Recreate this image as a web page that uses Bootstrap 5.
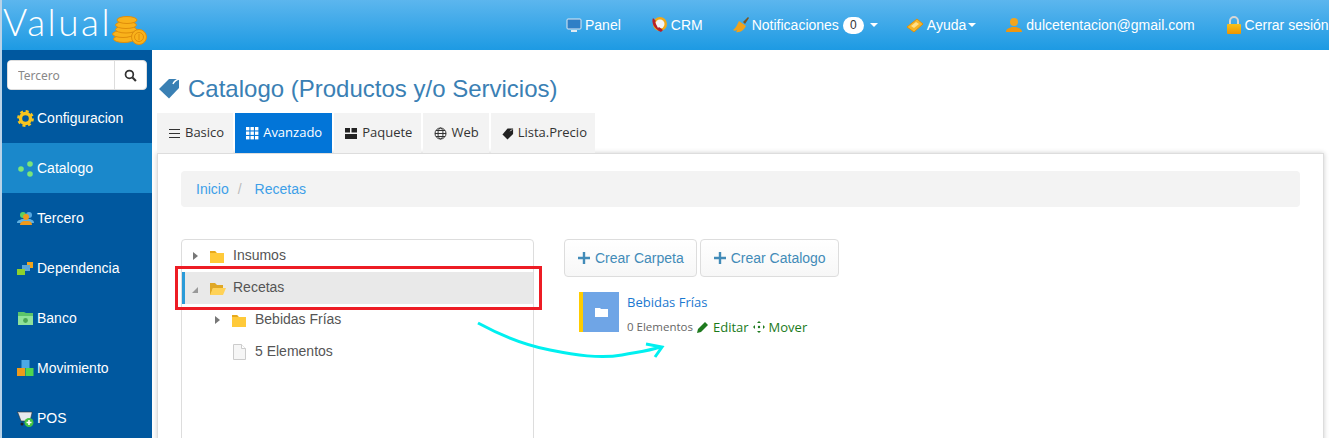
<!DOCTYPE html>
<html lang="es"><head><meta charset="utf-8"><title>Catalogo</title>
<link href="https://cdn.jsdelivr.net/npm/bootstrap@5.3.0/dist/css/bootstrap.min.css" rel="stylesheet">
<style>
html,body{height:438px;overflow:hidden}
body{font-family:"Liberation Sans",Arial,sans-serif;font-size:14px;color:#555;background:#fff;position:relative}
.top-bar{height:50px;background:linear-gradient(#5cb6ee,#1d9ae3);padding:0;flex-wrap:nowrap;justify-content:flex-start;border-left:2px solid #b9d3e8}
.brand-box{width:150px;height:50px;color:#fff;font-size:37px;line-height:44px;padding:0 0 6px 1px;letter-spacing:2.500px;font-family:"Lato","Liberation Sans",sans-serif;flex:none;gap:0}
.brand-name{font-weight:300}
.top-links{margin-left:414px;gap:29px;flex-wrap:nowrap;white-space:nowrap}
.top-links a{color:#fff;text-decoration:none;font-size:14px;display:flex;align-items:center;gap:3px}
.top-links a.lnk-notif{gap:2px}
.top-links a.lnk-help{gap:4px}
.top-links a.lnk-user{gap:4px;margin-left:1px}
.top-links a.lnk-exit{margin-left:2px}
.count-pill{background:#fff;color:#333;border-radius:9px;font-size:12px;line-height:17px;width:21px;text-align:center;margin-left:2px}
.caret-d{width:0;height:0;border:4px solid transparent;border-top-color:#fff;border-bottom:0}
.lnk-notif .caret-d{margin-left:4px}
.lnk-help .caret-d{margin-left:-2px}
.page-row{height:388px;overflow:hidden}
.side-col{width:152px;flex:none;background:#00589f;border-left:2px solid #b9d3e8;position:relative}
.find-box{margin:10px 5px 3px 5px;height:30px;background:#fff;border-radius:4px;overflow:hidden;border:1px solid #ddd}
.find-box input{border:0;outline:0;font-size:12px;color:#888;width:106px;padding:0 0 0 10px;height:28px;font-family:"Noto Sans","Open Sans",sans-serif}
.find-box input::placeholder{color:#888;opacity:1}
.find-btn{width:33px;border-left:1px solid #ddd}
.menu-item{height:50px;color:#fff;text-decoration:none;display:flex;align-items:center;gap:3px;padding:0 0 0 15px;font-size:14px}
.menu-item.on{background:#1a88cb}
.menu-item svg{flex:none}
.main-col{flex:1;min-width:0;padding:0 5px}
.page-title{font-family:"Liberation Sans",sans-serif;font-size:24px;color:#3a80b4;font-weight:400;margin:0 0 0 2px;height:63px;padding-top:14px;line-height:27px;display:flex;align-items:center;gap:8px}
.tab-row{gap:2px;height:40px;list-style:none;margin:0;padding:0}
.tab-row a{display:flex;align-items:center;gap:4px;height:40px;background:#f3f3f3;color:#333;text-decoration:none;padding:0 9px 0 11px;font-family:"Open Sans","Noto Sans",sans-serif;font-size:13px}
.tab-row a.on{background:#0275d8;color:#fff;padding-right:10px}
.tab-row a.tab-web{padding-right:10px}
.tab-row a.tab-price{padding-right:8px}
.white-panel{border:1px solid #ddd;border-bottom:0;box-shadow:0 0 5px rgba(0,0,0,.2);height:290px;padding:17px 23px 0 23px;background:#fff}
.crumb-bar{background:#f3f3f3;height:36px;border-radius:4px;display:flex;align-items:center;padding:0 15px;gap:6px;margin:0 0 32px 0}
.crumb-bar a{color:#3d9fe8;text-decoration:none}
.crumb-bar span{color:#bbb;margin:0 7px 0 3px}
.tree-wrap{width:353px;height:230px;border:1px solid #ddd;border-radius:4px;flex:none;color:#555}
.tree-line{height:32px;display:flex;align-items:center;position:relative}
.tree-line.sel{background:#e9e9e9;border-left:3px solid #2b9bd8}
.tree-line .tri{width:0;height:0;border-left:5px solid #777;border-top:4.500px solid transparent;border-bottom:4.500px solid transparent;margin-left:11px;margin-right:12px;flex:none}
.tree-line .tri-open{width:0;height:0;border-bottom:6px solid #999;border-left:6px solid transparent;margin-left:7px;margin-right:12px;margin-top:3px;flex:none}
.tree-label{margin-left:9px;padding-bottom:1px}
.sel .tree-label{margin-left:7px}
.lvl-2{padding-left:22px}
.lvl-2 .tri{margin-left:11px}
.lvl-file{padding-left:51px}
.right-pane{margin-left:30px}
.act-btn{height:38px;border:1px solid #ddd;border-radius:4px;background:linear-gradient(#fff,#f7f7f7);color:#428bb8;font-size:14px;display:flex;align-items:center;gap:5px;padding:0 12px 0 13px;text-decoration:none}
.act-row{gap:3px}
.folder-card{margin:15px 0 0 15px}
.folder-thumb{width:40px;height:40px;background:#6fa5e6;border-left:4px solid #ffcc00;display:flex;align-items:center;justify-content:center;flex:none}
.folder-meta{margin-left:8px;padding-top:2px;font-family:"Open Sans","Noto Sans",sans-serif;font-size:13px}
.folder-link{color:#1a78d0;text-decoration:none;display:block;line-height:16px;margin-bottom:9px}
.folder-sub{line-height:16px;white-space:nowrap;color:#666;font-size:11.500px;display:flex;align-items:center;gap:4px}
.folder-sub a{color:#1a7a1a;text-decoration:none;font-size:13px;display:inline-flex;align-items:center;gap:4px}
.over-mark{position:absolute;left:175px;top:266px;width:367px;height:44px;border:3px solid #ed1c24;pointer-events:none}
.over-arrow{position:absolute;left:470px;top:315px;pointer-events:none}
</style></head>
<body>
<nav class="navbar top-bar d-flex align-items-center">
  <div class="brand-box d-flex align-items-center"><span class="brand-name">Valual</span>
    <svg width="35" height="29" viewBox="0 0 35 29" class="mt-3 flex-shrink-0"><g fill="#f9b21b" stroke="#e08e0b" stroke-width="1"><ellipse cx="12" cy="23" rx="10.500" ry="3.500"/><ellipse cx="11" cy="18" rx="10.500" ry="3.500"/><ellipse cx="14" cy="13.500" rx="10.500" ry="3.500"/><ellipse cx="14" cy="9" rx="10.500" ry="3.500"/><ellipse cx="15" cy="4" rx="10" ry="3.500"/><circle cx="27" cy="21" r="7.500"/></g><circle cx="27" cy="21" r="4.500" fill="none" stroke="#e08e0b"/><path d="M27 18v6" stroke="#e08e0b"/></svg>
  </div>
  <div class="top-links d-flex align-items-center">
    <a href="#"><svg width="16" height="16" viewBox="0 0 16 16"><rect x="1" y="2" width="14" height="10" rx="1" fill="#2f7fc6" stroke="#dfe9f2"/><rect x="5" y="13" width="6" height="2" fill="#dfe9f2"/></svg>Panel</a>
    <a href="#"><svg width="18" height="18" viewBox="0 0 18 18"><circle cx="10" cy="8" r="7" fill="#f0a818"/><circle cx="10" cy="8" r="4.500" fill="#f4f4f4"/><path d="M3 2c-2 4 1 11 8 14l2-2-4-3-1 1-3-6 1-1z" fill="#b5202a"/></svg>CRM</a>
    <a href="#" class="lnk-notif"><svg width="18" height="18" viewBox="0 0 18 18"><path d="M11 6l5-5 1 1-4 6z" fill="#7a5520"/><path d="M7 5l7 5c-2 4-6 7-10 6 1-1 1-2 1-2-1 1-3 1-4 0 3-2 4-5 6-9z" fill="#f0a21c"/></svg>Notificaciones<span class="count-pill">0</span><span class="caret-d"></span></a>
    <a href="#" class="lnk-help"><svg width="16" height="16" viewBox="0 0 16 16"><path d="M0 10L10 2l6 5-9 8z" fill="#f5b52a" stroke="#d98f10"/><path d="M4 9l5-4 3 2-5 4z" fill="#ffe08a"/></svg>Ayuda<span class="caret-d"></span></a>
    <a href="#" class="lnk-user"><svg width="16" height="16" viewBox="0 0 16 16"><circle cx="8" cy="5" r="4" fill="#f2a51d"/><path d="M0 15c0-4 4-4 6-5h4c2 1 6 1 6 5z" fill="#ee9610"/></svg>dulcetentacion@gmail.com</a>
    <a href="#" class="lnk-exit"><svg width="16" height="18" viewBox="0 0 16 18"><defs><linearGradient id="lockfill" x1="0" y1="0" x2="0" y2="1"><stop offset="0" stop-color="#f7c21b"/><stop offset="1" stop-color="#ee9500"/></linearGradient></defs><path d="M4 8V5a4 4 0 0 1 8 0v3" fill="none" stroke="#d6d6d6" stroke-width="2"/><rect x="1" y="8" width="14" height="10" rx="1" fill="url(#lockfill)"/></svg>Cerrar sesión</a>
  </div>
</nav>
<div class="page-row d-flex">
  <aside class="side-col">
    <div class="find-box d-flex"><input placeholder="Tercero" aria-label="Tercero"><div class="find-btn d-flex align-items-center justify-content-center"><svg width="13" height="13" viewBox="0 0 12 12"><circle cx="5" cy="5" r="3.600" fill="none" stroke="#333" stroke-width="1.600"/><path d="M7.800 7.800L11 11" stroke="#333" stroke-width="2"/></svg></div></div>
    <a class="menu-item" href="#"><svg width="17" height="17" viewBox="0 0 17 17"><circle cx="8.500" cy="8.500" r="5" fill="none" stroke="#f7c51e" stroke-width="3.400"/><circle cx="8.500" cy="8.500" r="7.300" fill="none" stroke="#f7c51e" stroke-width="2.200" stroke-dasharray="3 2.730"/></svg>Configuracion</a>
    <a class="menu-item on" href="#"><svg width="17" height="17" viewBox="0 0 17 17"><circle cx="4" cy="9" r="2.800" fill="#7ae57a"/><circle cx="13" cy="4" r="2.800" fill="#7ae57a"/><circle cx="13" cy="14" r="2.800" fill="#7ae57a"/></svg>Catalogo</a>
    <a class="menu-item" href="#"><svg width="17" height="17" viewBox="0 0 17 17"><circle cx="6" cy="5" r="3" fill="#5fd05f"/><circle cx="12" cy="5" r="3" fill="#57a8e0"/><path d="M0 13c0-3 3-3 5-4h8c2 1 4 1 4 4z" fill="#5fb0e0"/><circle cx="9" cy="7" r="3" fill="#ef9a1c"/><path d="M3 15c0-3 3-4 4-4h4c2 0 4 1 4 4z" fill="#ef9a1c"/></svg>Tercero</a>
    <a class="menu-item" href="#"><svg width="17" height="17" viewBox="0 0 17 17"><rect x="10" y="2" width="6" height="6" fill="#f2a51d"/><rect x="5" y="5" width="8" height="6" fill="#5ba6d9"/><rect x="0" y="9" width="8" height="6" fill="#8ed12c"/></svg>Dependencia</a>
    <a class="menu-item" href="#"><svg width="17" height="15" viewBox="0 0 17 15"><path d="M1 1h6l2 1h7v12H1z" fill="#5cc46a"/><rect x="1" y="5" width="15" height="9" fill="#8fe29a"/><circle cx="8.500" cy="9.500" r="2.400" fill="#4aa856"/></svg>Banco</a>
    <a class="menu-item" href="#"><svg width="17" height="17" viewBox="0 0 17 17"><rect x="4.500" y="0" width="8" height="8" fill="#4ca9e6"/><rect x="0" y="8" width="8" height="8" fill="#ee9a1c"/><rect x="8.500" y="8" width="8" height="8" fill="#4fd64f"/></svg>Movimiento</a>
    <a class="menu-item" href="#"><svg width="17" height="17" viewBox="0 0 17 17"><path d="M0 2h15v1l-2 8H4L1 3z" fill="#e6eaee" stroke="#333" stroke-width=".600"/><circle cx="5" cy="14" r="1.500" fill="#222"/><circle cx="12" cy="12.500" r="4.500" fill="#43c443"/><path d="M12 10v5M9.500 12.500h5" stroke="#fff" stroke-width="1.600"/></svg>POS</a>
  </aside>
  <main class="main-col">
    <h1 class="page-title"><svg width="21" height="21" viewBox="0 0 21 21"><path d="M10 1h10v9L10 20.500 0 11z" fill="#3a80b4"/><path d="M14 6c1-3 3-4 6-5" fill="none" stroke="#fff" stroke-width="1.400"/></svg>Catalogo (Productos y/o Servicios)</h1>
    <ul class="tab-row d-flex">
      <li><a href="#"><svg width="13" height="13" viewBox="0 0 13 13"><path d="M1 2.500h11M1 6.500h11M1 10.500h11" stroke="#333" stroke-width="1.200"/></svg>Basico</a></li>
      <li><a class="on" href="#"><svg width="13" height="13" viewBox="0 0 13 13" fill="#fff"><rect width="3.400" height="3.400"/><rect x="4.500" width="3.400" height="3.400"/><rect x="9" width="3.400" height="3.400"/><rect y="4.500" width="3.400" height="3.400"/><rect x="4.500" y="4.500" width="3.400" height="3.400"/><rect x="9" y="4.500" width="3.400" height="3.400"/><rect y="9" width="3.400" height="3.400"/><rect x="4.500" y="9" width="3.400" height="3.400"/><rect x="9" y="9" width="3.400" height="3.400"/></svg>Avanzado</a></li>
      <li><a href="#"><svg width="13" height="13" viewBox="0 0 13 13" fill="#222"><rect y="1" width="5" height="4.500"/><rect x="6.500" y="1" width="5.500" height="4.500"/><rect y="7" width="12" height="5"/></svg>Paquete</a></li>
      <li><a class="tab-web" href="#"><svg width="13" height="13" viewBox="0 0 13 13" fill="none" stroke="#333"><circle cx="6.500" cy="6.500" r="5.500"/><ellipse cx="6.500" cy="6.500" rx="2.500" ry="5.500"/><path d="M1 6.500h11M2 3.500h9M2 9.500h9"/></svg>Web</a></li>
      <li><a class="tab-price" href="#"><svg width="12" height="13" viewBox="0 0 13 13" fill="#222"><path d="M6 1h6v6l-6 6-5.500-5.500z"/><path d="M9 4l2-2" stroke="#fff"/></svg>Lista.Precio</a></li>
    </ul>
    <section class="white-panel">
      <div class="crumb-bar"><a href="#">Inicio</a><span>/</span><a href="#">Recetas</a></div>
      <div class="d-flex">
        <div class="tree-wrap">
          <div class="tree-line"><span class="tri"></span><svg width="14" height="13" viewBox="0 0 14 13"><path d="M0 1h5l2 2h7v10H0z" fill="#ffca3a"/><path d="M0 1h5l1.500 2H0z" fill="#e7a91d"/></svg><span class="tree-label">Insumos</span></div>
          <div class="tree-line sel"><span class="tri-open"></span><svg width="16" height="13" viewBox="0 0 16 13"><path d="M0 1h5l2 2h6v3H3L1 13H0z" fill="#e0a826"/><path d="M3 6h13l-3 7H0z" fill="#ffd257"/></svg><span class="tree-label">Recetas</span></div>
          <div class="tree-line lvl-2"><span class="tri"></span><svg width="14" height="13" viewBox="0 0 14 13"><path d="M0 1h5l2 2h7v10H0z" fill="#ffca3a"/><path d="M0 1h5l1.500 2H0z" fill="#e7a91d"/></svg><span class="tree-label">Bebidas Frías</span></div>
          <div class="tree-line lvl-file"><svg width="13" height="16" viewBox="0 0 13 16"><path d="M.500.500h8l4 4v11H.500z" fill="#f6f6f6" stroke="#ccc"/><path d="M8.500.500v4h4" fill="#fff" stroke="#ccc"/></svg><span class="tree-label">5 Elementos</span></div>
        </div>
        <div class="right-pane">
          <div class="act-row d-flex">
            <a class="act-btn" href="#"><svg width="12" height="12" viewBox="0 0 12 12"><path d="M6 0v12M0 6h12" stroke="#428bb8" stroke-width="2.400"/></svg>Crear Carpeta</a>
            <a class="act-btn" href="#"><svg width="12" height="12" viewBox="0 0 12 12"><path d="M6 0v12M0 6h12" stroke="#428bb8" stroke-width="2.400"/></svg>Crear Catalogo</a>
          </div>
          <div class="folder-card d-flex">
            <div class="folder-thumb"><svg width="13" height="10" viewBox="0 0 13 10"><path d="M0 1h5l1 1h7v8H0z" fill="#fff"/></svg></div>
            <div class="folder-meta">
              <a class="folder-link" href="#">Bebidas Frías</a>
              <div class="folder-sub">0 Elementos <a href="#"><svg width="12" height="12" viewBox="0 0 12 12"><path d="M0 12l1-4 7-7 3 3-7 7z" fill="#1f7a1f"/></svg>Editar</a> <a href="#"><svg width="12" height="12" viewBox="0 0 12 12" fill="#1f7a1f"><path d="M6 0l2 2H4zM6 12l2-2H4zM0 6l2-2v4zM12 6l-2-2v4z"/><circle cx="6" cy="6" r="1.200"/></svg>Mover</a></div>
            </div>
          </div>
        </div>
      </div>
    </section>
  </main>
</div>
<div class="over-mark"></div>
<svg class="over-arrow" width="200" height="50" viewBox="0 0 200 50"><path d="M8 8C30 20 55 30 80 35S130 44 152 40 178 36 190 32M176 29l16 3-7 10" fill="none" stroke="#00f0f0" stroke-width="3"/></svg>
</body></html>
